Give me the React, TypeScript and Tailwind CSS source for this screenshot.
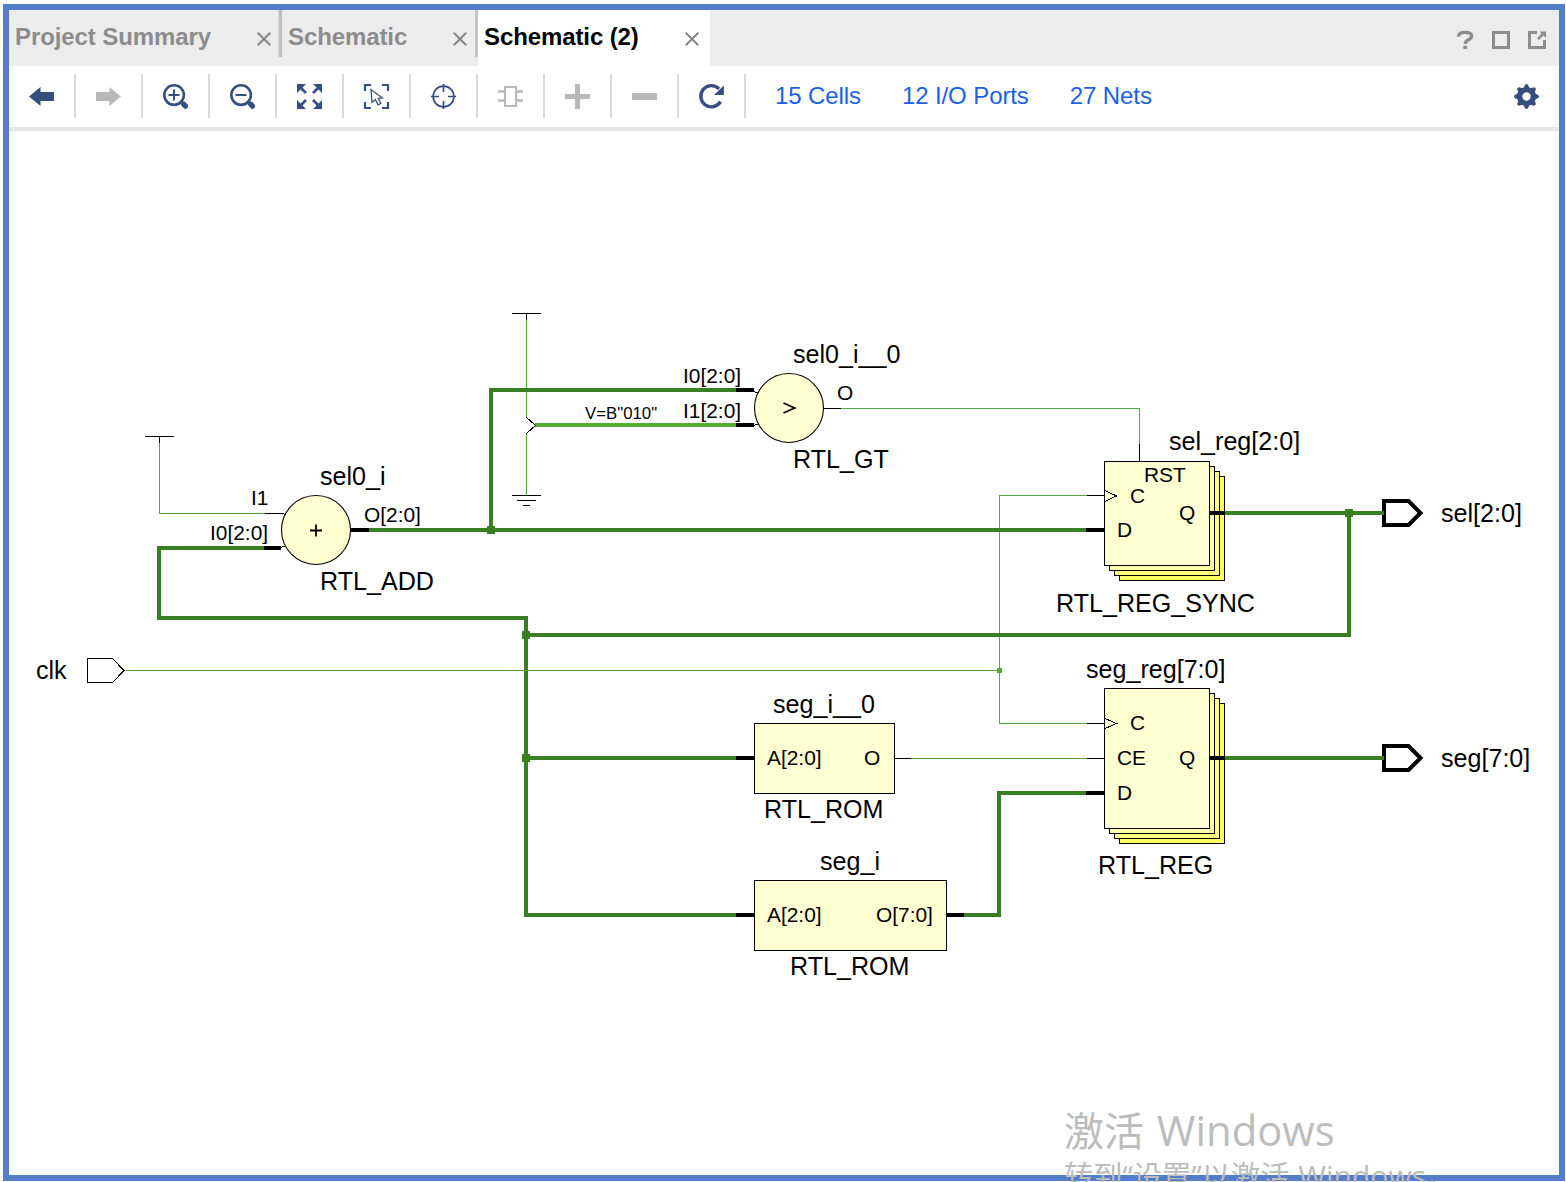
import type { ReactNode } from "react";

const GREEN = "#377f22";
const LIME = "#55ab36";
const NAVY = "#354f80";
const GRAY = "#b8b8b8";

function CloseIcon() {
  return (
    <svg width="14" height="14" viewBox="0 0 14 14" fill="none" stroke="#868686" strokeWidth="2">
      <path d="M0.7 0.7 L13.3 13.3 M13.3 0.7 L0.7 13.3" />
    </svg>
  );
}

function Icon({ children }: { children: ReactNode }) {
  return (
    <svg width="25" height="25" viewBox="0.5 0.5 25 25" fill="none" overflow="visible">
      {children}
    </svg>
  );
}

const TOOLS: ReactNode[] = [
  <path d="M0.5 13 L12 3.5 V8.5 H25.5 V17.5 H12 V22.5 Z" fill={NAVY} />,
  <path d="M25.5 13 L14 3.5 V8.5 H0.5 V17.5 H14 V22.5 Z" fill={GRAY} />,
  <g stroke={NAVY}>
    <circle cx="11.6" cy="11.6" r="9.8" strokeWidth="2.6" />
    <path d="M6 11.5 H17 M11.5 6 V17" strokeWidth="2" />
    <path d="M18 18 L20.5 20.5" strokeWidth="2" />
    <path d="M21.3 20.8 L22.8 22.6" strokeWidth="5.4" strokeLinecap="round" />
  </g>,
  <g stroke={NAVY}>
    <circle cx="11.6" cy="11.6" r="9.8" strokeWidth="2.6" />
    <path d="M6 11.5 H17" strokeWidth="2" />
    <path d="M18 18 L20.5 20.5" strokeWidth="2" />
    <path d="M21.3 20.8 L22.8 22.6" strokeWidth="5.4" strokeLinecap="round" />
  </g>,
  <g>
    <path
      d="M0.5 0.5 H9.5 L0.5 9.5 Z M25.5 0.5 H16.5 L25.5 9.5 Z M0.5 25.5 H9.5 L0.5 16.5 Z M25.5 25.5 H16.5 L25.5 16.5 Z"
      fill={NAVY}
    />
    <path d="M3 3 L9.5 9.5 M23 3 L16.5 9.5 M3 23 L9.5 16.5 M23 23 L16.5 16.5" stroke={NAVY} strokeWidth="2.8" />
  </g>,
  <g stroke={NAVY}>
    <path d="M1.5 7.5 V1.5 H7.5 M18.5 1.5 H24.5 V7.5 M24.5 18.5 V24.5 H18.5 M7.5 24.5 H1.5 V18.5" strokeWidth="2.2" />
    <path d="M7.5 6 L8.5 19 L11.8 16 L14.6 21.3 L17.3 20 L14.8 14.8 L18.8 14.3 Z" strokeWidth="1.3" />
  </g>,
  <g stroke={NAVY}>
    <circle cx="13" cy="13" r="10.4" strokeWidth="1.7" />
    <path d="M13 0.5 V8.5 M13 17.5 V25.5 M0.5 13 H8.5 M17.5 13 H25.5" strokeWidth="1.7" />
  </g>,
  <g stroke={GRAY} strokeWidth="2">
    <rect x="7.5" y="3.5" width="11" height="19" />
    <path d="M0.5 8 H7.5 M0.5 17 H7.5 M18.5 8 H25.5 M18.5 17 H25.5" strokeWidth="2.6" />
  </g>,
  <path d="M13 0.5 V25.5 M0.5 13 H25.5" stroke={GRAY} strokeWidth="5" />,
  <path d="M0.5 13 H25.5" stroke={GRAY} strokeWidth="7" />,
  <g>
    <path d="M20.6 5.4 A10.6 10.6 0 1 0 22 18.2" stroke={NAVY} strokeWidth="3.4" />
    <path d="M25.4 2 V11.5 H15.5 Z" fill={NAVY} />
  </g>,
];

function Gear() {
  return (
    <Icon>
      <g fill={NAVY}>
        <path
          fillRule="evenodd"
          d="M13 3.4 A9.6 9.6 0 1 0 13 22.6 A9.6 9.6 0 1 0 13 3.4 Z M13 8.8 A4.2 4.2 0 1 1 13 17.2 A4.2 4.2 0 1 1 13 8.8 Z"
        />
        {[0, 45, 90, 135, 180, 225, 270, 315].map((a) => (
          <path key={a} d="M9.8 5 L11.6 1.2 Q13 -0.2 14.4 1.2 L16.2 5 Z" transform={`rotate(${a} 13 13)`} />
        ))}
      </g>
    </Icon>
  );
}

function Tab({ label, className, active }: { label: string; className: string; active?: boolean }) {
  return (
    <div className={`flex items-center justify-between ${className} ${active ? "bg-white text-black" : "text-[#8c8c8c]"}`}>
      <span className="-mt-[2px] text-[24px] leading-[28px] font-bold tracking-[-0.1px] whitespace-nowrap">{label}</span>
      <span className="mt-[2px]">
        <CloseIcon />
      </span>
    </div>
  );
}

function TabDivider() {
  return <div className="h-[47px] w-[4px] border-r-[3px] border-l border-r-[#bfbfbf] border-l-[#dcdcdc]" />;
}

// x, baseline y, text
const NAMES: [number, number, string][] = [
  [320, 485, "sel0_i"],
  [320, 590, "RTL_ADD"],
  [793, 363, "sel0_i__0"],
  [793, 468, "RTL_GT"],
  [1169, 450, "sel_reg[2:0]"],
  [1056, 612, "RTL_REG_SYNC"],
  [1441, 522, "sel[2:0]"],
  [1086, 678, "seg_reg[7:0]"],
  [1098, 874, "RTL_REG"],
  [1441, 767, "seg[7:0]"],
  [36, 679, "clk"],
  [773, 713, "seg_i__0"],
  [764, 818, "RTL_ROM"],
  [820, 870, "seg_i"],
  [790, 975, "RTL_ROM"],
];

const PINS: [number, number, string][] = [
  [251, 505, "I1"],
  [210, 540, "I0[2:0]"],
  [364, 522, "O[2:0]"],
  [683, 383, "I0[2:0]"],
  [683, 418, "I1[2:0]"],
  [837, 400, "O"],
  [1144, 482, "RST"],
  [1130, 503, "C"],
  [1179, 520, "Q"],
  [1117, 537, "D"],
  [1130, 730, "C"],
  [1117, 765, "CE"],
  [1179, 765, "Q"],
  [1117, 800, "D"],
  [767, 765, "A[2:0]"],
  [864, 765, "O"],
  [767, 922, "A[2:0]"],
  [876, 922, "O[7:0]"],
];

function Register({ y, h }: { y: number; h: number }) {
  return (
    <g stroke="#000" strokeWidth="1">
      <rect x="1119.5" y={y + 15} width="105" height={h} fill="#ffff60" />
      <rect x="1114.5" y={y + 10} width="105" height={h} fill="#ffff80" />
      <rect x="1109.5" y={y + 5} width="105" height={h} fill="#ffffa8" />
      <rect x="1104.5" y={y} width="105" height={h} fill="#ffffd1" />
    </g>
  );
}

function Schematic() {
  return (
    <svg className="block" width="1550" height="1044" viewBox="9 131 1550 1044" fill="none" fontFamily='"Liberation Sans", Arial, sans-serif'>
      <g stroke={LIME} strokeWidth="1" shapeRendering="crispEdges">
        <path d="M159.5 442 V513.5 H265 M526.5 319 V417 M526.5 434 V495 M841 408.5 H1139.5 V444" />
        <path d="M1087 495.5 H999.5 V723.5 H1087 M911 758.5 H1087" />
        <path d="M535 425 H736" strokeWidth="4" />
      </g>
      <g stroke={GREEN} strokeWidth="4" shapeRendering="crispEdges">
        <path d="M368 530 H1087 M491 530 V390 H736" />
        <path d="M264 548 H159 V618 H526 V915 H736 M526 758 H736 M526 635 H1349 V513" />
        <path d="M1225 513 H1382 M1225 758 H1382 M964 915 H999 V793 H1087" />
      </g>
      <path d="M124 670.5 H999" stroke={LIME} shapeRendering="crispEdges" />
      <g fill={GREEN}>
        <rect x="487" y="526" width="8" height="8" />
        <rect x="522" y="631" width="8" height="8" />
        <rect x="522" y="754" width="8" height="8" />
        <rect x="1345" y="509" width="8" height="8" />
      </g>
      <rect x="997" y="668" width="5" height="5" fill={LIME} />

      <Register y={461.5} h={104} />
      <Register y={688.5} h={140} />
      <g fill="#ffffd1" stroke="#000" strokeWidth="1.1">
        <circle cx="316" cy="530" r="34.5" />
        <circle cx="789" cy="408" r="34.5" />
        <rect x="754.5" y="723.5" width="140" height="70" strokeWidth="1" />
        <rect x="754.5" y="880.5" width="192" height="70" strokeWidth="1" />
      </g>

      <g stroke="#000" strokeWidth="1" shapeRendering="crispEdges">
        <path d="M145 436.5 H174 M159.5 436 V443 M512 313.5 H541 M526.5 313 V320" />
        <path d="M512 495.5 H541 M517 500.5 H536 M523 505.5 H530" />
        <path d="M265 513.5 H283 M824 408.5 H841 M1139.5 444 V461 M1087 495.5 H1104 M1087 723.5 H1104 M1087 758.5 H1104 M895 758.5 H911" />
        <path d="M526.5 417.5 L535.5 425.5 L526.5 433.5 M1105 490.5 L1116.5 496 L1105 501.5 M1105 718.5 L1116.5 723.5 L1105 728.5" />
        <path d="M87.5 658.5 H112.5 L124 670.5 L112.5 682.5 H87.5 Z" />
        <path d="M283 513.5 L286 515 M281 547.5 L285 546 M754 391.5 L758 393 M754 425.5 L758 424" />
      </g>
      <g stroke="#000" strokeWidth="4">
        <path d="M351 530 H369 M264 548 H281 M736 390 H754 M736 425 H754 M1086 530 H1104 M1209 513 H1225" />
        <path d="M736 758 H754 M736 915 H754 M947 915 H964 M1086 793 H1104 M1209 758 H1225" />
        <path d="M1384 501 H1408.5 L1420.5 513 L1408.5 525 H1384 Z" />
        <path d="M1384 746 H1408.5 L1420.5 758 L1408.5 770 H1384 Z" />
      </g>
      <path d="M1380 513 H1384 M1380 758 H1384" stroke={GREEN} strokeWidth="4" />
      <g stroke="#000" strokeWidth="1.8">
        <path d="M310 530.5 H322 M316 524.5 V536.5" />
        <path d="M783.5 403 L794.5 408 L783.5 413" />
      </g>

      <g fill="#000" fontSize="25.1">
        {NAMES.map(([x, y, t]) => (
          <text key={`${x}-${y}`} x={x} y={y}>
            {t}
          </text>
        ))}
      </g>
      <g fill="#000" fontSize="20.9">
        {PINS.map(([x, y, t]) => (
          <text key={`${x}-${y}`} x={x} y={y}>
            {t}
          </text>
        ))}
      </g>
      <text x="585" y="419" fontSize="16.8" fill="#000">
        V=B"010"
      </text>
    </svg>
  );
}

export default function App() {
  return (
    <div className="relative h-[1182px] w-[1566px] overflow-hidden bg-white pt-[4px] pl-[3px] font-['Liberation_Sans',Arial,sans-serif]">
      <div className="flex h-[1177px] w-[1562px] flex-col border-[6px] border-[#537dc9] bg-white">
        <div className="flex h-[56px] shrink-0 bg-[#ececec]">
          <Tab label="Project Summary" className="w-[269px] pr-[7px] pl-[6px]" />
          <TabDivider />
          <Tab label="Schematic" className="w-[192px] pr-[7px] pl-[6px]" />
          <div className="flex w-[4px] justify-end">
            <div className="h-[47px] w-[3px] bg-[#c4c4c4]" />
          </div>
          <Tab label="Schematic (2)" active className="w-[232px] pr-[11px] pl-[6px]" />
          <div className="flex flex-1 items-center justify-end gap-[18px] pt-[4px] pr-[13px]">
            <svg width="18" height="20" viewBox="0 0 18 20" fill="none" stroke="#8c8c8c">
              <path d="M2.3 6.6 Q2.6 2.4 9 2.4 Q15.6 2.4 15.6 6 Q15.6 8.2 12.4 9.8 Q9.3 11.4 9.3 14" strokeWidth="3.4" />
              <path d="M9.3 15.8 V19" strokeWidth="4" />
            </svg>
            <svg width="18" height="18" viewBox="0 0 18 18" fill="none" stroke="#8c8c8c">
              <rect x="1.5" y="1.5" width="15" height="15" strokeWidth="3" />
            </svg>
            <svg width="18" height="18" viewBox="0 0 18 18" fill="none" stroke="#8c8c8c">
              <path d="M9 1.5 H1.5 V16.5 H16.5 V9" strokeWidth="3" />
              <path d="M10 8 L15 3" strokeWidth="2.6" />
              <path d="M11.5 0.5 H18 V7 Z" fill="#8c8c8c" stroke="none" />
            </svg>
          </div>
        </div>

        <div className="flex h-[65px] shrink-0 items-start border-b-[4px] border-[#e6e6e6] pt-[8px]">
          {TOOLS.map((tool, i) => (
            <div key={i} className="flex h-[44px] w-[67px] shrink-0 items-start justify-center border-r-2 border-[#dadada] pt-[10px]">
              <Icon>{tool}</Icon>
            </div>
          ))}
          <div className="flex flex-1 gap-[41px] pt-[8px] pl-[29px] text-[24px] leading-[28px] tracking-[-0.1px] text-[#1a5fe8]">
            <span>15 Cells</span>
            <span>12 I/O Ports</span>
            <span>27 Nets</span>
          </div>
          <div className="pt-[10px] pr-[20px]">
            <Gear />
          </div>
        </div>

        <Schematic />
      </div>

      <div className="absolute top-[1101px] left-[1064px] font-['Open_Sans','Noto_Sans_CJK_SC',sans-serif] whitespace-nowrap text-[#bcbcbc]">
        <div className="h-[58px] text-[40px] leading-[58px]">
          激活<span className="ml-[2px] text-[41.8px]"> Windows</span>
        </div>
        <div className="h-[34px] text-[29.3px] leading-[34px]">
          转到“设置”以激活<span className="ml-[1px] text-[30px]"> Windows</span>。
        </div>
      </div>
    </div>
  );
}
